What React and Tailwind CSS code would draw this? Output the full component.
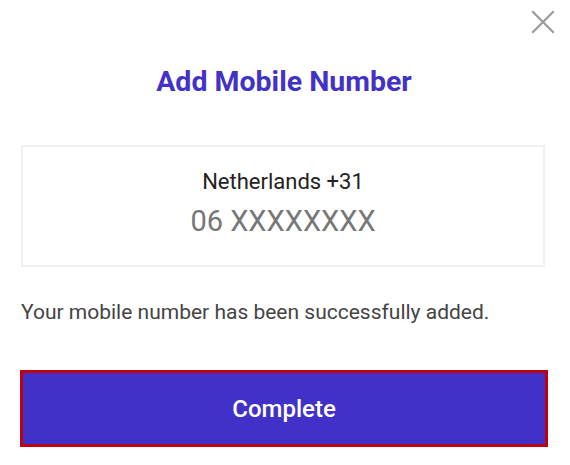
export default function App() {
  return (
    <div className="relative w-[570px] h-[465px] bg-white font-['Roboto',sans-serif]">
      {/* Close */}
      <button className="absolute right-[15px] top-[10px] text-[#9a9a9a]">
        <svg width="24" height="24" viewBox="0 0 24 24" fill="none" stroke="currentColor" strokeWidth="2.2" strokeLinecap="square">
          <path d="M2 2L22 22M22 2L2 22" />
        </svg>
      </button>

      <div className="pl-5 pr-[22px] pt-[65px]">
        <h1 className="text-center text-[28.5px] leading-[34px] font-bold text-[#4232c6]">
          Add Mobile Number
        </h1>

        <div className="mt-[46px] ml-px mr-[3px] border-2 border-[#f0f0f0] pt-[22px] pb-[27px] flex flex-col items-center">
          <p className="text-[22px] leading-[26px] text-[#222]">Netherlands +31</p>
          <p className="mt-[9px] text-[29px] leading-[34px] text-[#777]">06 XXXXXXXX</p>
        </div>

        <p className="mt-[33px] pl-px text-[21px] leading-[25px] text-[#444]">
          Your mobile number has been successfully added.
        </p>

        <button className="mt-[45px] w-full h-[77px] bg-[#4231c8] border-[3px] border-[#c0000f] text-white text-[24px] font-medium">
          Complete
        </button>
      </div>
    </div>
  );
}
